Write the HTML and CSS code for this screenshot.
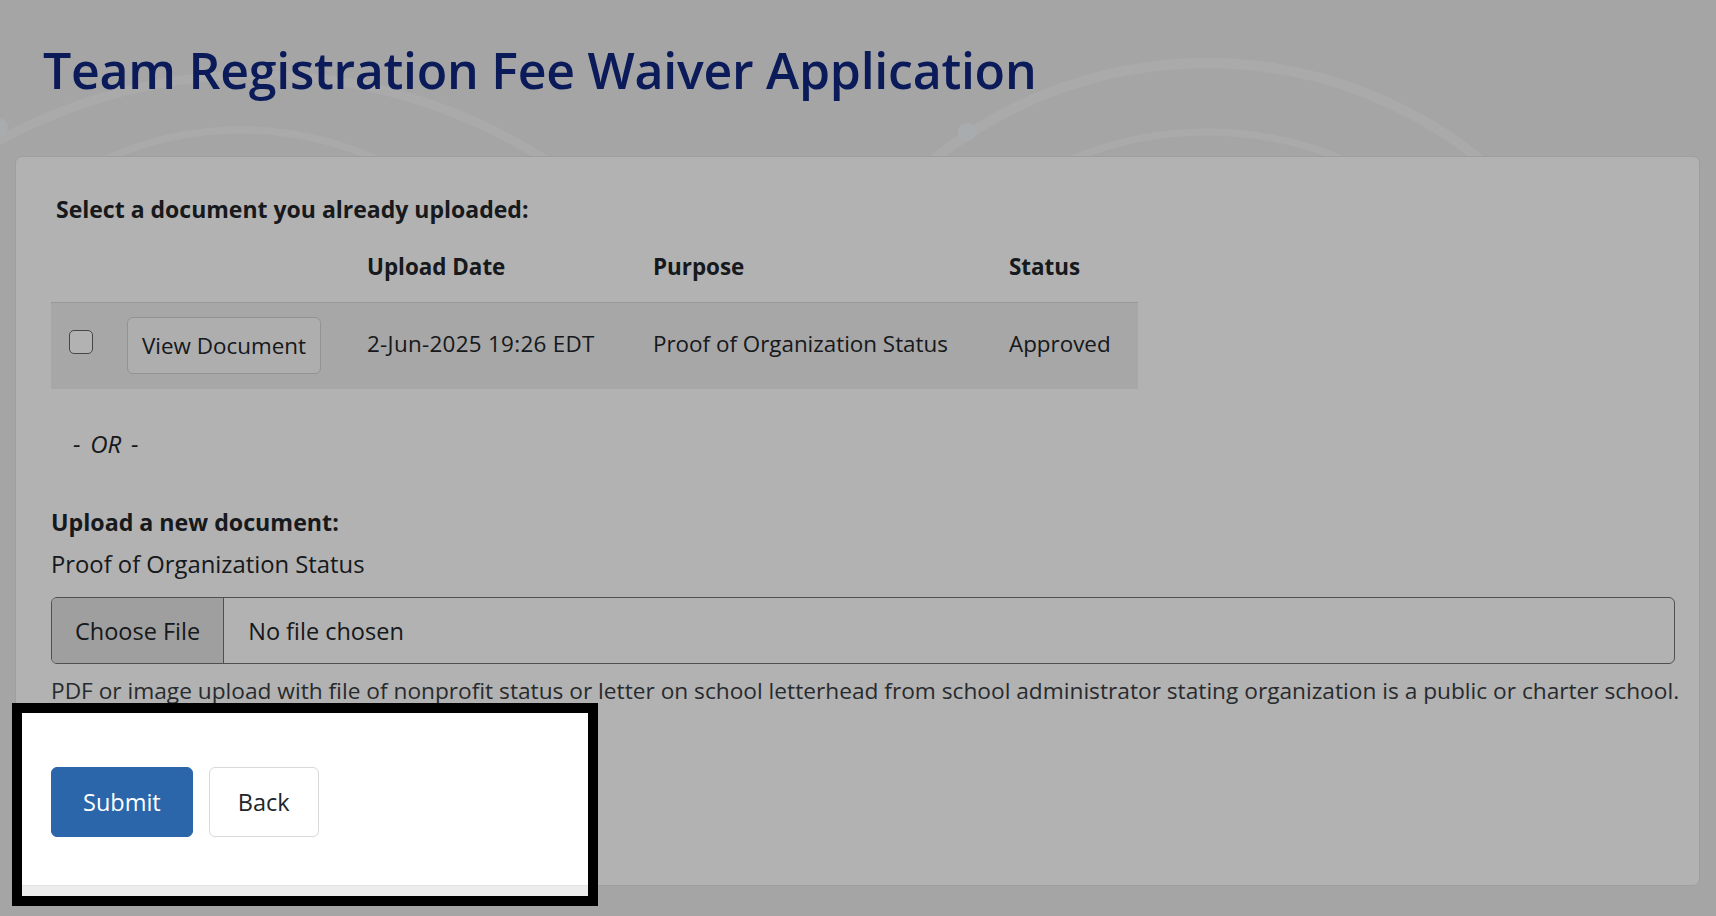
FILE: index.html
```html
<!DOCTYPE html>
<html lang="en">
<head>
<meta charset="utf-8">
<title>Team Registration Fee Waiver Application</title>
<link rel="stylesheet" href="styles.css">
</head>
<body>
<svg class="bg-art" viewBox="0 0 1716 200" width="1716" height="200" aria-hidden="true">
  <g fill="none" stroke="#ffffff" stroke-opacity="0.42" stroke-linecap="round">
    <circle cx="256" cy="612" r="537" stroke-width="9"/>
    <circle cx="241" cy="460" r="330" stroke-width="7"/>
    <circle cx="1207" cy="498" r="435" stroke-width="10"/>
    <circle cx="1207" cy="483" r="351" stroke-width="7"/>
  </g>
  <circle cx="967" cy="132" r="9" fill="#f3f7fc" fill-opacity="0.9"/>
  <circle cx="0" cy="127" r="8" fill="#f3f7fc" fill-opacity="0.8"/>
</svg>
<main class="page">
  <h1 class="page-title">Team Registration Fee Waiver Application</h1>
  <section class="card">
    <h2 class="section-label first">Select a document you already uploaded:</h2>
    <table class="doc-table">
      <colgroup>
        <col class="c-check">
        <col class="c-view">
        <col class="c-date">
        <col class="c-purpose">
        <col class="c-status">
      </colgroup>
      <thead>
        <tr>
          <th></th>
          <th></th>
          <th>Upload Date</th>
          <th>Purpose</th>
          <th>Status</th>
        </tr>
      </thead>
      <tbody>
        <tr>
          <td class="check-cell"><input type="checkbox" class="check" aria-label="Select document"></td>
          <td class="view-cell"><button type="button" class="btn-view">View Document</button></td>
          <td class="date-cell">2-Jun-2025 19:26 EDT</td>
          <td>Proof of Organization Status</td>
          <td>Approved</td>
        </tr>
      </tbody>
    </table>
    <p class="or">- OR -</p>
    <h2 class="section-label upload">Upload a new document:</h2>
    <div class="field-label">Proof of Organization Status</div>
    <div class="file-input">
      <span class="file-btn">Choose File</span>
      <span class="file-name">No file chosen</span>
    </div>
    <p class="help">PDF or image upload with file of nonprofit status or letter on school letterhead from school administrator stating organization is a public or charter school.</p>
    <div class="actions">
      <button type="button" class="btn-submit">Submit</button>
      <button type="button" class="btn-back">Back</button>
      <div class="spotlight" aria-hidden="true"></div>
    </div>
  </section>
</main>
</body>
</html>
```
FILE: styles.css
```css
* { box-sizing: border-box; }

html, body {
  margin: 0;
  padding: 0;
}

body {
  position: relative;
  min-height: 916px;
  background: #ededee;
  font-family: "Open Sans", "Noto Sans", sans-serif;
  color: #212529;
  overflow: hidden;
}

.bg-art {
  position: absolute;
  top: 0;
  left: 0;
  z-index: 0;
}

.page {
  position: relative;
  z-index: 1;
  padding: 38px 16px 0 15px;
}

.page-title {
  margin: 0 0 54px 28px;
  font-size: 50px;
  line-height: 64px;
  font-weight: 600;
  color: #10267f;
  letter-spacing: -0.25px;
}

.card {
  background: #ffffff;
  border: 1px solid #e2e2e2;
  border-radius: 7px;
  padding: 36px 24px 48px 35px;
}

.section-label {
  margin: 0;
  font-size: 23.2px;
  line-height: 32px;
  font-weight: 700;
}

.section-label.first {
  padding-left: 5px;
  font-size: 23px;
}

.doc-table {
  margin-top: 8px;
  width: 1087px;
  table-layout: fixed;
  border-collapse: collapse;
  font-size: 22.4px;
  line-height: 32px;
}

.c-check { width: 58px; }
.c-view { width: 240px; }
.c-date { width: 286px; }
.c-purpose { width: 356px; }
.c-status { width: 147px; }

.doc-table th {
  text-align: left;
  font-weight: 700;
  padding: 18px 18px 19px;
}

.doc-table td {
  background: #efefef;
  border-top: 1px solid #dadada;
  padding: 12px 18px 17px;
  vertical-align: middle;
  white-space: nowrap;
}

.doc-table td.check-cell,
.doc-table td.view-cell {
  padding: 14px 18px 15px;
}

.doc-table td.date-cell {
  letter-spacing: 0.3px;
}

.check {
  appearance: none;
  -webkit-appearance: none;
  display: block;
  margin: 0 0 7px 0;
  width: 24px;
  height: 24px;
  background: #ffffff;
  border: 1.5px solid #666;
  border-radius: 5px;
}

.btn-view {
  display: block;
  font: inherit;
  color: #212529;
  background: #f9f9fa;
  border: 1px solid #d3d3d3;
  border-radius: 6px;
  padding: 11.5px 14px;
  white-space: nowrap;
}

.or {
  margin: 39px 0 0 22px;
  font-style: italic;
  font-size: 24px;
  line-height: 32px;
  word-spacing: 3.5px;
}

.section-label.upload { margin-top: 46px; }

.field-label {
  margin-top: 10px;
  font-size: 23.8px;
  line-height: 32px;
}

.file-input {
  margin-top: 17px;
  display: flex;
  align-items: stretch;
  height: 67px;
  border: 1px solid #737373;
  border-radius: 6px;
  overflow: hidden;
  font-size: 23.5px;
  line-height: 32px;
  background: #fff;
}

.file-btn {
  display: flex;
  align-items: center;
  padding: 0 23px;
  background: #e4e4e4;
  border-right: 1px solid #737373;
}

.file-name {
  display: flex;
  align-items: center;
  padding-left: 24px;
}

.help {
  margin: 11px 0 0 0;
  font-size: 22.7px;
  line-height: 32px;
  color: #393d42;
  white-space: nowrap;
}

.actions {
  position: relative;
  margin-top: 60px;
  display: flex;
  gap: 16px;
}

.btn-submit,
.btn-back {
  font-family: inherit;
  font-size: 23.5px;
  line-height: 32px;
  border-radius: 6px;
}

.btn-submit {
  padding: 18px 31px;
  color: #ffffff;
  background: #2b66ab;
  border: 1px solid #2b66ab;
}

.btn-back {
  padding: 18px 28px;
  color: #212529;
  background: #ffffff;
  border: 1px solid #d9d9d9;
}

.spotlight {
  position: absolute;
  left: -39px;
  top: -64px;
  width: 586px;
  height: 203px;
  border: 10px solid #000;
  box-shadow: 0 0 0 3000px rgba(0, 0, 0, 0.3);
  pointer-events: none;
  z-index: 5;
}
```
